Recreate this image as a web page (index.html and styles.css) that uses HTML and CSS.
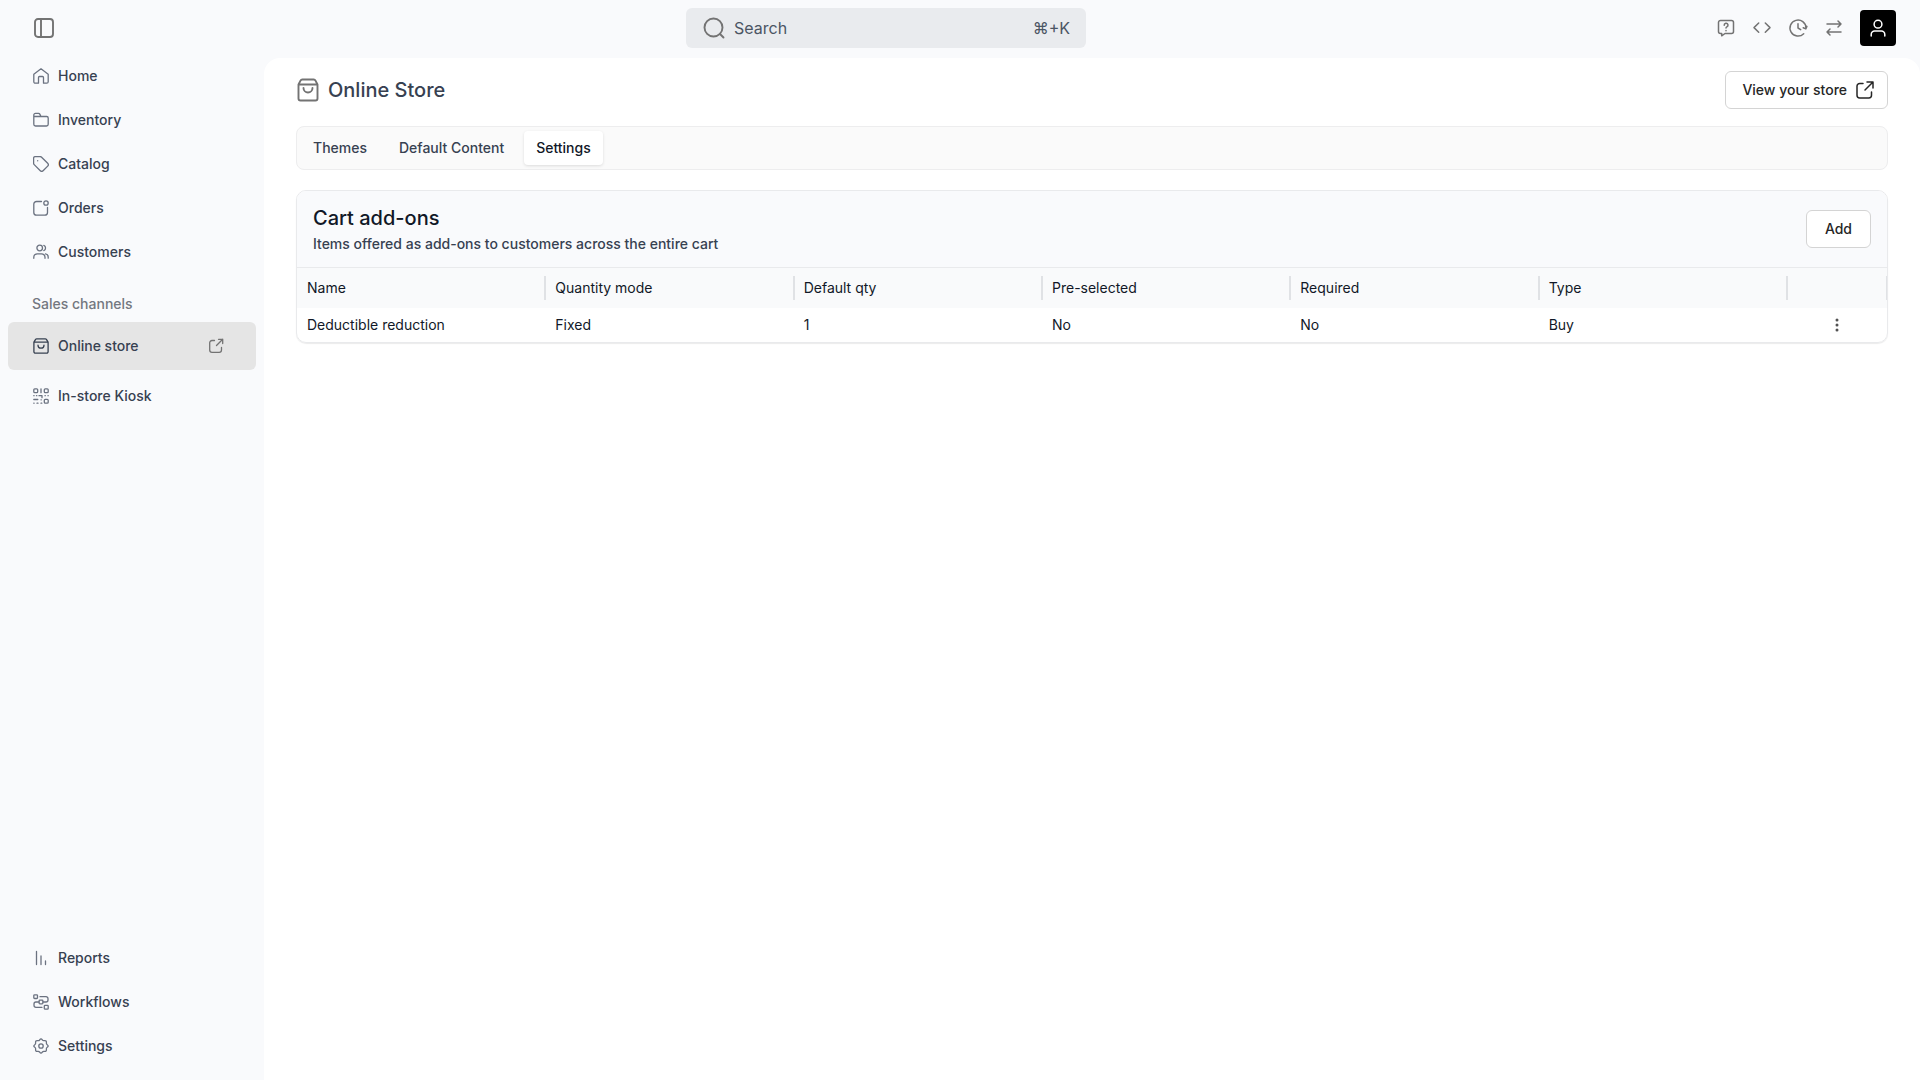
FILE: index.html
```html
<!DOCTYPE html>
<html lang="en">
<head>
    <meta charset="UTF-8">
    <meta name="viewport" content="width=device-width, initial-scale=1.0">
    <title>Online Store - Settings</title>
    <link rel="stylesheet" href="styles.css">
</head>
<body>
    <div id="app">
        <header class="topbar">
            <button class="icon-button" type="button" aria-label="Toggle sidebar">
                <svg class="icon-lg" viewBox="0 0 24 24"><rect x="3" y="3" width="18" height="18" rx="3"/><path d="M9 3v18"/></svg>
            </button>
            <label class="search">
                <svg class="icon-lg" viewBox="0 0 24 24"><circle cx="11.500" cy="11.500" r="9"/><path d="M18 18l3.500 3.500"/></svg>
                <input type="text" placeholder="Search" aria-label="Search">
                <span class="shortcut">⌘+K</span>
            </label>
            <div class="topbar-actions">
                <button class="icon-button" type="button" aria-label="Help">
                    <svg class="icon-md" viewBox="0 0 20 20"><path d="M4.500 2.500h11a2 2 0 0 1 2 2v9a2 2 0 0 1-2 2H9l-3.300 2.300v-2.300H4.500a2 2 0 0 1-2-2v-9a2 2 0 0 1 2-2z"/><path d="M8.200 7.200a1.900 1.900 0 1 1 2.700 1.600c-.6.3-.9.6-.9 1.300M10 12.400v.3"/></svg>
                </button>
                <button class="icon-button" type="button" aria-label="Developer">
                    <svg class="icon-md" viewBox="0 0 20 20"><path d="M6.700 5L2 9.600l4.700 4.600M13.300 5L18 9.600l-4.700 4.600"/></svg>
                </button>
                <button class="icon-button" type="button" aria-label="Recent activity">
                    <svg class="icon-md" viewBox="0 0 20 20"><path d="M15.700 15.700A8 8 0 1 1 18 10M15.200 9.800l2.600 1.100 1.100-2.500M10 5.800V10l2.700 1.600"/></svg>
                </button>
                <button class="icon-button" type="button" aria-label="Switch">
                    <svg class="icon-md" viewBox="0 0 20 20"><path d="M3 6h14M14 3l3 3-3 3M17 14H3M6 11l-3 3 3 3"/></svg>
                </button>
                <button class="avatar" type="button" aria-label="Account">
                    <svg class="icon-md" viewBox="0 0 20 20"><circle cx="10" cy="6.200" r="3.900"/><path d="M3.200 18v-1.600a3.400 3.400 0 0 1 3.400-3.400h6.800a3.400 3.400 0 0 1 3.400 3.400V18"/></svg>
                </button>
            </div>
        </header>

        <div class="layout">
            <nav class="sidebar">
                <ul class="nav-list">
                    <li><a href="#"><svg class="icon-sm" viewBox="0 0 16 16"><path d="M5.500 15.200V9.500a1 1 0 0 1 1-1h3a1 1 0 0 1 1 1v5.700M.8 6.300L8 .8l7.200 5.500v7.400a1.500 1.500 0 0 1-1.500 1.500h-3.200M.8 6.300v7.400a1.500 1.500 0 0 0 1.500 1.500h3.200"/></svg>Home</a></li>
                    <li><a href="#"><svg class="icon-sm" viewBox="0 0 16 16"><path d="M.8 4.500h12.900a1.500 1.500 0 0 1 1.500 1.500v6.300a1.700 1.700 0 0 1-1.700 1.700h-11a1.700 1.700 0 0 1-1.700-1.700V3a1.600 1.600 0 0 1 1.600-1.600h3.200a1.500 1.500 0 0 1 1.200.7L8 4.500"/></svg>Inventory</a></li>
                    <li><a href="#"><svg class="icon-sm" viewBox="0 0 16 16"><path d="M.6 2.200A1.600 1.600 0 0 1 2.200.6h5a2 2 0 0 1 1.400.6l6.100 6.100a2 2 0 0 1 0 2.800l-4.600 4.600a2 2 0 0 1-2.800 0L1.200 8.600A2 2 0 0 1 .6 7.200z"/><path d="M4.700 4.700v.1"/></svg>Catalog</a></li>
                    <li><a href="#"><svg class="icon-sm" viewBox="0 0 16 16"><path d="M8.500 1.500h-5A2.700 2.700 0 0 0 .8 4.200v8.300a2.700 2.700 0 0 0 2.700 2.700h8.300a2.700 2.700 0 0 0 2.700-2.700v-5"/><circle cx="13" cy="3" r="2.200"/></svg>Orders</a></li>
                    <li><a href="#"><svg class="icon-sm" viewBox="0 0 16 16"><circle cx="6.700" cy="4" r="2.800"/><path d="M.8 14.300v-1a3.500 3.500 0 0 1 3.500-3.500h4.200a3.500 3.500 0 0 1 3.500 3.500v1M10.800 1.400a2.800 2.800 0 0 1 0 5.200M12.500 9.800a3.300 3.300 0 0 1 2.700 3.400v1"/></svg>Customers</a></li>
                </ul>
                <h2 class="nav-heading">Sales channels</h2>
                <ul class="nav-list channels">
                    <li><a class="active" href="#"><svg class="icon-sm" viewBox="0 0 16 16"><path d="M.9 4.200L2.600 1.400A1.300 1.300 0 0 1 3.700.8h8.600a1.300 1.300 0 0 1 1.100.6l1.700 2.800v9.500a1.500 1.500 0 0 1-1.500 1.500H2.400a1.500 1.500 0 0 1-1.500-1.500zM.9 4.200h14.200M5 7.200a3 3 0 0 0 6 0"/></svg>Online store<svg class="icon-sm external" viewBox="0 0 16 16"><path d="M6.500 2.500H4A2.300 2.300 0 0 0 1.700 4.800v7.200A2.300 2.300 0 0 0 4 14.300h7.200a2.300 2.300 0 0 0 2.300-2.300V9.500M8.500 7.500L14.700 1.300M10.500 1.300h4.200v4.200"/></svg></a></li>
                    <li><a href="#"><svg class="icon-sm" viewBox="0 0 16 16"><rect x=".8" y=".8" width="3.900" height="3.900" rx="1"/><rect x="11.300" y=".8" width="3.900" height="3.900" rx="1"/><rect x="11.300" y="11.300" width="3.900" height="3.900" rx="1"/><path d="M8 .8v3.900M.8 7.700h.3M3.500 7.700h.3M6 7.700h3v2M12 7.700h.3M15 7.700h.2M.8 11.500h4M8 11.800h.3M.8 15.200h.3M4 15.200h1M8 15.200h.8"/></svg>In-store Kiosk</a></li>
                </ul>
                <ul class="nav-list nav-bottom">
                    <li><a href="#"><svg class="icon-sm" viewBox="0 0 16 16"><path d="M3.500 1.500v13M8 6v8.500M12.500 11v3.500"/></svg>Reports</a></li>
                    <li><a href="#"><svg class="icon-sm" viewBox="0 0 16 16"><rect x=".8" y=".8" width="3.700" height="3.700" rx=".8"/><rect x="6.100" y="6.100" width="3.800" height="3.800" rx=".8"/><rect x="11.300" y="11.300" width="3.900" height="3.900" rx=".8"/><path d="M7 2.700h6a2 2 0 0 1 2 2v1.300a2 2 0 0 1-2 2h-3M6 8H3a2 2 0 0 0-2 2v1.300a2 2 0 0 0 2 2h6"/></svg>Workflows</a></li>
                    <li><a href="#"><svg class="icon-sm" viewBox="0 0 16 16"><circle cx="8" cy="8" r="2.200"/><path d="M6.700 1.800Q8-.2 9.300 1.800Q10 2.900 11.400 2.600Q13.700 2.300 13.400 4.600Q13.100 6 14.200 6.700Q16.200 8 14.200 9.300Q13.100 10 13.400 11.400Q13.700 13.700 11.400 13.400Q10 13.100 9.300 14.200Q8 16.200 6.700 14.200Q6 13.100 4.600 13.400Q2.300 13.700 2.600 11.400Q2.900 10 1.800 9.300Q-.2 8 1.800 6.700Q2.900 6 2.600 4.600Q2.300 2.300 4.600 2.600Q6 2.900 6.700 1.800z"/></svg>Settings</a></li>
                </ul>
            </nav>

            <main class="content">
                <div class="page-header">
                    <svg class="icon-lg" viewBox="0 0 24 24"><path d="M2.500 6.500l2-3.900A2 2 0 0 1 6.300 1.500h11.400a2 2 0 0 1 1.800 1.100l2 3.900v14a2 2 0 0 1-2 2h-15a2 2 0 0 1-2-2zM2.500 6.500h19M7.500 10a4.500 4.500 0 0 0 9 0"/></svg>
                    <h1>Online Store</h1>
                    <a class="button" href="#">View your store<svg class="icon-md" viewBox="0 0 20 20"><path d="M8 3.500H4.700A2.700 2.700 0 0 0 2 6.200v9.100A2.700 2.700 0 0 0 4.700 18h9.100a2.700 2.700 0 0 0 2.700-2.700V12M10 10l8-8M12 2h6v6"/></svg></a>
                </div>

                <div class="tabs" role="tablist">
                    <button type="button" role="tab">Themes</button>
                    <button type="button" role="tab">Default Content</button>
                    <button type="button" role="tab" aria-selected="true">Settings</button>
                </div>

                <section class="card">
                    <div class="card-header">
                        <div>
                            <h2>Cart add-ons</h2>
                            <p>Items offered as add-ons to customers across the entire cart</p>
                        </div>
                        <button class="button" type="button">Add</button>
                    </div>
                    <table>
                        <thead>
                            <tr>
                                <th>Name</th>
                                <th>Quantity mode</th>
                                <th>Default qty</th>
                                <th>Pre-selected</th>
                                <th>Required</th>
                                <th>Type</th>
                                <th class="actions" aria-label="Actions"></th>
                            </tr>
                        </thead>
                        <tbody>
                            <tr>
                                <td>Deductible reduction</td>
                                <td>Fixed</td>
                                <td>1</td>
                                <td>No</td>
                                <td>No</td>
                                <td>Buy</td>
                                <td class="actions">
                                    <button class="icon-button" type="button" aria-label="Row actions">
                                        <svg class="icon-sm dots" viewBox="0 0 16 16"><circle cx="8" cy="3" r="1.500"/><circle cx="8" cy="8" r="1.500"/><circle cx="8" cy="13" r="1.500"/></svg>
                                    </button>
                                </td>
                            </tr>
                        </tbody>
                    </table>
                </section>
            </main>
        </div>
    </div>
</body>
</html>
```

FILE: styles.css
```css
* {
    box-sizing: border-box;
}

body {
    margin: 0;
    background: #f9fafc;
    color: #374151;
    font-family: Inter, "Liberation Sans", sans-serif;
    font-size: 14px;
    line-height: 20px;
}

h1, h2, p, ul {
    margin: 0;
    padding: 0;
}

a {
    color: inherit;
    text-decoration: none;
}

button, input {
    font: inherit;
    color: inherit;
}

svg {
    display: block;
    flex-shrink: 0;
    fill: none;
    stroke: #737373;
    stroke-linecap: round;
    stroke-linejoin: round;
}

.icon-sm {
    width: 16px;
    height: 16px;
    stroke-width: 1.3;
}

.icon-md {
    width: 20px;
    height: 20px;
    stroke-width: 1.5;
}

.icon-lg {
    width: 24px;
    height: 24px;
    stroke-width: 1.9;
}

.icon-button {
    padding: 0;
    border: none;
    background: none;
    cursor: pointer;
}

#app {
    min-height: 100vh;
    display: flex;
    flex-direction: column;
}

.topbar {
    height: 56px;
    padding: 0 24px 0 32px;
    display: flex;
    align-items: center;
    justify-content: space-between;
}

.search {
    width: 400px;
    height: 40px;
    padding: 0 16px;
    display: flex;
    align-items: center;
    gap: 8px;
    background: #e9ebee;
    border-radius: 6px;
    color: #4b5563;
    font-size: 16px;
}

.search input {
    flex: 1;
    min-width: 0;
    padding: 0;
    border: none;
    outline: none;
    background: none;
}

.search input::placeholder {
    color: #4b5563;
    opacity: 1;
}

.topbar-actions {
    display: flex;
    align-items: center;
    gap: 16px;
}

.avatar {
    width: 36px;
    height: 36px;
    padding: 0;
    display: grid;
    place-items: center;
    border: none;
    border-radius: 4px;
    background: #000;
    cursor: pointer;
}

.avatar svg {
    stroke: #fff;
}

.layout {
    flex: 1;
    display: flex;
}

/* Sidebar */
.sidebar {
    width: 264px;
    flex-shrink: 0;
    padding: 0 8px 14px;
    display: flex;
    flex-direction: column;
    font-weight: 500;
}

.nav-list {
    display: flex;
    flex-direction: column;
    gap: 4px;
    list-style: none;
}

.nav-list a {
    height: 40px;
    padding: 0 32px 0 25px;
    display: flex;
    align-items: center;
    gap: 9px;
    border-radius: 6px;
}

.nav-list svg {
    stroke: #6b7280;
}

.nav-heading {
    margin: 22px 0 8px;
    padding-left: 24px;
    color: #737780;
    font-size: 14px;
    font-weight: 500;
}

.channels {
    gap: 2px;
}

.channels a {
    height: 48px;
}

.nav-list .active {
    background: #e5e5e5;
}

.nav-list .active svg {
    stroke: #374151;
}

.nav-list .active .external {
    margin-left: auto;
    stroke: #737373;
}

.nav-bottom {
    margin-top: auto;
}

/* Main panel */
.content {
    flex: 1;
    min-width: 0;
    margin-top: 2px;
    padding: 13px 32px;
    background: #fff;
    border-radius: 16px 16px 0 0;
}

.page-header {
    display: flex;
    align-items: center;
    gap: 8px;
}

h1 {
    font-size: 20px;
    font-weight: 500;
    line-height: 28px;
}

.button {
    height: 38px;
    padding: 0 18px;
    display: flex;
    align-items: center;
    gap: 8px;
    border: 1px solid #d4d4d4;
    border-radius: 6px;
    background: #fff;
    color: #262626;
    font-weight: 500;
    cursor: pointer;
}

.page-header .button {
    margin-left: auto;
    padding: 0 12px 0 16px;
}

.button svg {
    stroke: #262626;
}

.tabs {
    margin: 17px 0 20px;
    padding: 4px;
    display: flex;
    gap: 8px;
    border: 1px solid #ededee;
    border-radius: 8px;
    background: #fafafa;
}

.tabs button {
    height: 34px;
    padding: 0 12px;
    border: none;
    border-radius: 4px;
    background: none;
    font-weight: 500;
    cursor: pointer;
}

.tabs button[aria-selected="true"] {
    background: #fff;
    color: #111827;
    box-shadow: 0 1px 3px rgba(0, 0, 0, 0.12);
}

.card {
    border: 1px solid #e9eaec;
    border-radius: 10px;
    overflow: hidden;
    box-shadow: 0 1px 1px rgba(0, 0, 0, 0.08);
}

.card-header {
    padding: 13px 16px;
    display: flex;
    align-items: center;
    justify-content: space-between;
    border-bottom: 1px solid #e9eaec;
    background: #f9fafc;
    font-weight: 500;
}

.card-header h2 {
    margin-bottom: 2px;
    color: #111827;
    font-size: 20px;
    font-weight: 500;
    line-height: 28px;
}

table {
    width: 100%;
    table-layout: fixed;
    border-collapse: collapse;
    color: #111827;
}

th, td {
    padding: 0 10px;
    text-align: left;
    font-weight: 400;
}

th {
    height: 40px;
    position: relative;
    background: #f9fafb;
}

/* Column resize handle */
th::after {
    content: "";
    position: absolute;
    top: 8px;
    right: -1px;
    z-index: 1;
    width: 2px;
    height: 24px;
    background: #e0e2e5;
}

td {
    height: 34px;
}

.actions {
    width: 100px;
}

.actions .icon-button {
    display: block;
    margin: 0 auto;
}

.dots {
    fill: #525252;
    stroke: none;
}
```
